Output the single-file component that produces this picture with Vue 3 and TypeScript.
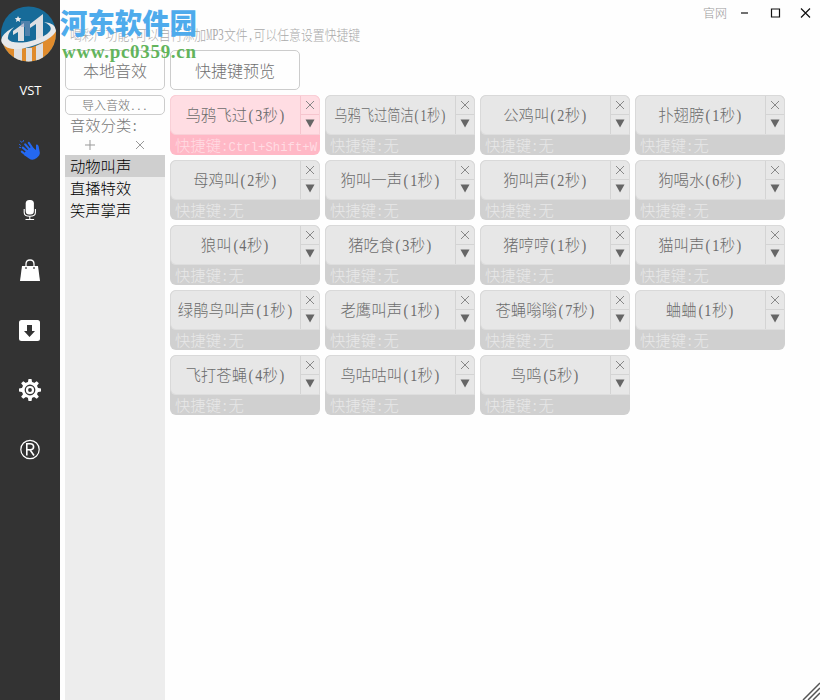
<script setup lang="ts">
import { ref, h, type FunctionalComponent } from 'vue'

interface Sound {
  name: string
  seconds: number
  hotkey?: string
  narrow?: boolean
}

// Latin characters take half-width cells beside the full-width Chinese ones
const Cells: FunctionalComponent<{ text: string }> = (props) =>
  h('span', { class: 'cells' }, Array.from(props.text).map((c) =>
    c.charCodeAt(0) < 256 ? h('i', { class: ['half', { wide: c === 'M' }] }, c) : c))
Cells.props = ['text']

const categories = ['动物叫声', '直播特效', '笑声掌声']
const current = ref(0)
const active = ref(0)
const sounds: Sound[] = [
  { name: '乌鸦飞过', seconds: 3, hotkey: 'Ctrl+Shift+W' },
  { name: '乌鸦飞过简洁', seconds: 1, narrow: true },
  { name: '公鸡叫', seconds: 2 },
  { name: '扑翅膀', seconds: 1 },
  { name: '母鸡叫', seconds: 2 },
  { name: '狗叫一声', seconds: 1 },
  { name: '狗叫声', seconds: 2 },
  { name: '狗喝水', seconds: 6 },
  { name: '狼叫', seconds: 4 },
  { name: '猪吃食', seconds: 3 },
  { name: '猪哼哼', seconds: 1 },
  { name: '猫叫声', seconds: 1 },
  { name: '绿鹃鸟叫声', seconds: 1 },
  { name: '老鹰叫声', seconds: 1 },
  { name: '苍蝇嗡嗡', seconds: 7 },
  { name: '蛐蛐', seconds: 1 },
  { name: '飞打苍蝇', seconds: 4 },
  { name: '鸟咕咕叫', seconds: 1 },
  { name: '鸟鸣', seconds: 5 },
]
const teeth = [0, 45, 90, 135, 180, 225, 270, 315]
</script>

<template>
  <div class="window">
    <nav class="side">
      <div class="logo-space"></div>
      <div class="nav-item vst">VST</div>
      <div class="nav-item">
        <svg width="24" height="24" viewBox="0 0 24 24">
          <g stroke="#2468f2" stroke-linecap="round" fill="none">
            <path d="M8 17L3.8 13.6M10 14L4.8 9.6M12 12L7.2 6.4M15 11L10.8 4.8" stroke-width="2.1" />
            <path d="M1.5 6.5l1 .8M2.5 3l1 1.3M5.5 2.5l-.6 1.2M1.5 9.3l1.2.3" stroke-width="1" />
          </g>
          <path d="M7 14L13.5 8.5L18 12L18 6.8Q20 5.8 20.7 8.5L21.8 14.5Q22.2 17 18.7 20Q14.5 23.4 11 20.5L6 17Z" fill="#2468f2" />
        </svg>
      </div>
      <div class="nav-item">
        <svg width="24" height="24" viewBox="0 0 24 24">
          <rect x="7.7" y="2" width="8.2" height="14.5" rx="3.5" fill="#fff" />
          <path d="M6.2 11v3.5q0 3.8 5.6 3.8t5.6-3.8V11M11.8 18v3M7.5 21.5h8.6" fill="none" stroke="#fff" stroke-width="1.1" />
        </svg>
      </div>
      <div class="nav-item">
        <svg width="24" height="24" viewBox="0 0 24 24">
          <path d="M4 8h16l2 15H2z" fill="#fff" />
          <path d="M8 10V6q0-4 4-4t4 4v4" fill="none" stroke="#fff" stroke-width="1.3" />
          <path d="M8 9v2M16 9v2" stroke="#333" stroke-width="1.2" />
        </svg>
      </div>
      <div class="nav-item">
        <svg width="24" height="24" viewBox="0 0 24 24">
          <rect x="1" y="2" width="21" height="21" rx="2.5" fill="#fff" />
          <path d="M9 7h5v6h3l-5.5 6L6 13h3z" fill="#333" />
        </svg>
      </div>
      <div class="nav-item">
        <svg width="24" height="24" viewBox="-12 -12 24 24">
          <path v-for="a in teeth" :key="a" d="M-2.2-7L-1.5-11H1.5L2.2-7z" fill="#fff" :transform="`rotate(${a})`" />
          <circle r="6.8" fill="none" stroke="#fff" stroke-width="2.8" />
          <circle r="3" fill="none" stroke="#fff" stroke-width="2.2" />
        </svg>
      </div>
      <div class="nav-item">
        <svg width="24" height="24" viewBox="0 0 24 24">
          <circle cx="12" cy="11.5" r="9.2" fill="none" stroke="#fff" stroke-width="1.2" />
          <path d="M8.8 17.5V5.8h3.5q3.3 0 3.3 3t-3.3 3H8.8M12 11.8l4 5.7" fill="none" stroke="#fff" stroke-width="1.6" />
        </svg>
      </div>
    </nav>

    <main class="main">
      <header class="titlebar">
        <span class="site">官网</span>
        <svg width="84" height="26" viewBox="0 0 84 26" fill="none" stroke="#111" stroke-width="1.2">
          <path d="M5 13h7" /><path d="M35.5 9h8v8h-8z" /><path d="M65 8.5l9 9m0-9l-9 9" />
        </svg>
      </header>
      <p class="notice"><Cells text="喝彩广功能,可以自行添加MP3文件,可以任意设置快捷键" /></p>
      <div class="tabs">
        <button class="tab local">本地音效</button>
        <button class="tab preview">快捷键预览</button>
      </div>
      <div class="content">
        <aside class="panel">
          <button class="import"><Cells text="导入音效..." /></button>
          <div class="caption"><Cells text="音效分类:" /></div>
          <div class="tools">
            <svg width="10" height="10"><path d="M5 0v10M0 5h10" /></svg>
            <svg width="10" height="10"><path d="M1 1l8 8m0-8l-8 8" /></svg>
          </div>
          <ul class="list">
            <li v-for="(c, i) in categories" :key="c" :class="{ selected: i === current }" @click="current = i">{{ c }}</li>
          </ul>
        </aside>
        <section class="grid">
          <article v-for="(s, i) in sounds" :key="s.name" class="card" :class="{ active: i === active }" @click="active = i">
            <div class="top">
              <div class="name"><Cells :class="{ narrow: s.narrow }" :text="`${s.name}(${s.seconds}秒)`" /></div>
              <div class="actions">
                <span class="act"><svg width="10" height="10"><path d="M1 1l8 8m0-8l-8 8" fill="none" stroke="currentColor" /></svg></span>
                <span class="act"><svg width="10" height="9"><path d="M.5 .5h9L5 8.5z" fill="currentColor" /></svg></span>
              </div>
            </div>
            <div class="hotkey"><Cells text="快捷键:" /><span v-if="s.hotkey" class="mono">{{ s.hotkey }}</span><template v-else>无</template></div>
          </article>
        </section>
      </div>
    </main>

    <svg class="mark" width="200" height="64" viewBox="0 0 200 64">
      <defs><clipPath id="disc"><circle cx="28.5" cy="34" r="27.5" /></clipPath></defs>
      <g clip-path="url(#disc)">
        <path d="M0 0h60v70H0z" fill="#176b99" />
        <path d="M0 41Q10 50 28 48Q48 44 58 25V64H0z" fill="#e08b2c" />
        <path d="M13 31L24 23V41H18V32L13 35ZM30 24L43 14V38L36 41V24L30 28ZM14 48h8v15h-8zM26 48h6v15h-6zM36 46l7-3v19h-7z" fill="#dedfe2" />
        <path d="M21 21h9v15h-5v-9h-4z" fill="#8997bd" opacity=".5" />
        <path d="M18 16l1 2 2.3.2-1.7 1.5.5 2.3-2.1-1.3-2 1.3.5-2.3-1.7-1.5 2.3-.2z" fill="#eee" />
      </g>
      <path d="M14 27Q-2 36 2 43Q9 53 29 47Q52 40 56 31Q56 23 44 22Q53 26 50 31Q45 38 27 42Q11 44 8 39Q7 34 14 27Z" fill="#e7e8ea" />
      <text class="mark-cn" x="60" y="34" textLength="137" lengthAdjust="spacingAndGlyphs">河东软件园</text>
      <text class="mark-url" x="62" y="58" textLength="134" lengthAdjust="spacing">www.pc0359.cn</text>
    </svg>
    <svg class="grip" width="18" height="18" viewBox="0 0 18 18"><path d="M1 18L18 1M6 18L18 6M11 18L18 11" stroke="#555" stroke-width="1.5" /></svg>
  </div>
</template>

<style>
body { margin: 0; background: #fff; }
.cells { display: inline-block; white-space: nowrap; }
.cells .half {
  display: inline-block;
  width: .5em;
  text-align: center;
  font-style: normal;
  font-family: "Liberation Serif", serif;
  transform: translateY(-.07em) scale(.92, 1.12);
}
.cells .wide { transform: translateY(-.07em) scale(.56, 1.12); text-indent: -.2em; }
</style>

<style scoped>
.window {
  position: relative;
  display: flex;
  width: 820px;
  height: 700px;
  overflow: hidden;
  background: #fefefe;
  font-family: "Noto Sans CJK SC", sans-serif;
  font-weight: 300;
  color: #777;
}
.side { width: 60px; flex: none; background: #333; }
.logo-space { height: 60px; }
.nav-item { height: 60px; display: flex; align-items: center; justify-content: center; }
.vst { color: #fff; font: 400 13px "Open Sans", sans-serif; padding-left: 1px; box-sizing: border-box; }
.main { flex: 1; min-width: 0; display: flex; flex-direction: column; padding-left: 5px; }
.titlebar { height: 26px; display: flex; justify-content: flex-end; align-items: center; }
.site { font-size: 12px; line-height: 26px; color: #999; margin-right: 9px; }
.notice {
  margin: 0 0 4px 5px;
  height: 20px;
  line-height: 16px;
  font-size: 14px;
  color: #aaa;
  transform: scaleX(.846);
  transform-origin: left center;
}
.tabs { display: flex; gap: 5px; height: 40px; }
button { font-family: inherit; font-weight: inherit; color: #707070; background: #fefefe; border: 1px solid #ccc; padding: 0; }
.tab { height: 40px; border-radius: 5px; font-size: 16px; line-height: 36px; }
.local { width: 100px; }
.preview { width: 130px; }
.content { flex: 1; display: flex; gap: 5px; padding-top: 5px; }
.panel { width: 100px; display: flex; flex-direction: column; }
.import { height: 20px; border-radius: 5px; font-size: 12px; line-height: 16px; }
.caption { height: 20px; line-height: 18px; font-size: 15.3px; padding-left: 5px; }
.tools { height: 20px; display: flex; justify-content: space-around; align-items: center; }
.tools svg { fill: none; stroke: #999; }
.list { flex: 1; margin: 0; padding: 0; list-style: none; background: #ededed; }
.list li { height: 22px; line-height: 20px; padding-left: 5px; font-size: 15.3px; color: #000; }
.list .selected { background: #cfcfcf; }
.grid { display: grid; grid-template-columns: repeat(4, 150px); grid-auto-rows: 60px; gap: 5px; align-content: start; }
.card { border-radius: 6px; background: #d0d0d0; overflow: hidden; }
.top {
  height: 40px;
  box-sizing: border-box;
  display: flex;
  border: 1px solid #d9d9d9;
  border-bottom-color: #dedede;
  border-radius: 6px 6px 0 6px;
  background: #e7e7e7;
}
.name {
  width: 129px;
  display: flex;
  align-items: center;
  justify-content: center;
  font-size: 15.4px;
  line-height: 38px;
  color: #6c6c6c;
}
.narrow { transform: scaleX(.86); margin: 0 -12px; }
.actions { flex: 1; display: flex; flex-direction: column; border-left: 1px solid #d4d4d4; }
.act { flex: 1; display: flex; align-items: center; justify-content: center; color: #888; }
.act + .act { border-top: 1px solid #d4d4d4; color: #666; padding-bottom: 2px; }
.hotkey { height: 20px; line-height: 18px; padding-left: 5px; font-size: 15.3px; color: #e8e8e8; white-space: nowrap; }
.mono { font-family: "Liberation Mono", monospace; font-size: 12.3px; }
.active { background: #ffb8c6; }
.active .top { background: #ffdde3; border-color: #f8d0d7; }
.active .actions, .active .act + .act { border-color: #f6c5ce; }
.active .hotkey { color: #ffdce3; }
.mark { position: absolute; left: 0; top: 0; pointer-events: none; }
.mark-cn { font: 900 28px "Noto Sans CJK SC", sans-serif; fill: #4eabec; }
.mark-url { font: bold 19px "Liberation Serif", serif; fill: #62b45c; }
.grip { position: absolute; right: 0; bottom: 0; }
</style>
